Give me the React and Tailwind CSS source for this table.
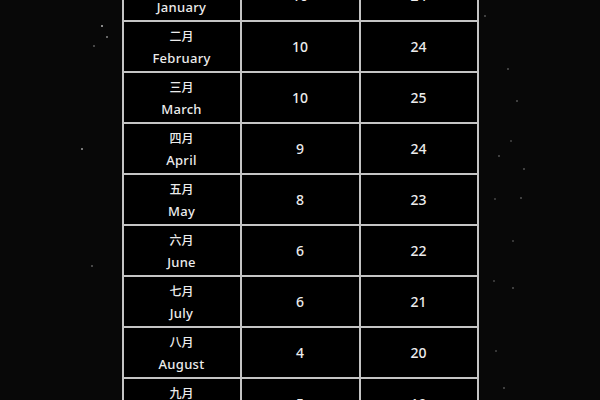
import React from "react";

const rows = [
  ["一月", "January", "10", "24"],
  ["二月", "February", "10", "24"],
  ["三月", "March", "10", "25"],
  ["四月", "April", "9", "24"],
  ["五月", "May", "8", "23"],
  ["六月", "June", "6", "22"],
  ["七月", "July", "6", "21"],
  ["八月", "August", "4", "20"],
  ["九月", "September", "5", "19"],
];

const stars = [
  [101, 25, 0.7],
  [106, 36, 0.5],
  [93, 45, 0.35],
  [81, 148, 0.6],
  [91, 265, 0.35],
  [484, 15, 0.3],
  [507, 68, 0.3],
  [516, 100, 0.3],
  [510, 140, 0.25],
  [498, 155, 0.3],
  [523, 168, 0.3],
  [520, 197, 0.3],
  [494, 198, 0.25],
  [512, 240, 0.25],
  [493, 280, 0.25],
  [512, 287, 0.3],
  [495, 350, 0.25],
  [503, 387, 0.3],
];

export default function App() {
  return (
    <div
      className="relative w-[600px] h-[400px] overflow-hidden bg-[#080808] flex justify-center"
      style={{ fontFamily: '"Noto Sans", "Noto Sans CJK SC", sans-serif' }}
    >
      {stars.map(([x, y, o], i) => (
        <div
          key={i}
          className="absolute w-[2px] h-[2px] rounded-full bg-white"
          style={{ left: x, top: y, opacity: o }}
        />
      ))}
      <div className="mt-[-31px] h-fit grid grid-cols-[116px_117px_116px] gap-[2px] p-[2px] bg-[#c4c4c4]">
        {rows.map(([cn, en, a, b], i) => (
          <React.Fragment key={i}>
            <div className="h-[49px] bg-black flex flex-col items-center justify-center text-[#ececec] font-medium">
              <div className="text-[12px] leading-[23px]" style={{ fontFamily: '"Noto Sans CJK SC", sans-serif' }}>{cn}</div>
              <div className="text-[13px] leading-[23px] tracking-[0.3px]">{en}</div>
            </div>
            <div className="h-[49px] bg-black flex items-center justify-center text-[14px] font-medium text-[#ececec]">{a}</div>
            <div className="h-[49px] bg-black flex items-center justify-center text-[14px] font-medium text-[#ececec]">{b}</div>
          </React.Fragment>
        ))}
      </div>
    </div>
  );
}
